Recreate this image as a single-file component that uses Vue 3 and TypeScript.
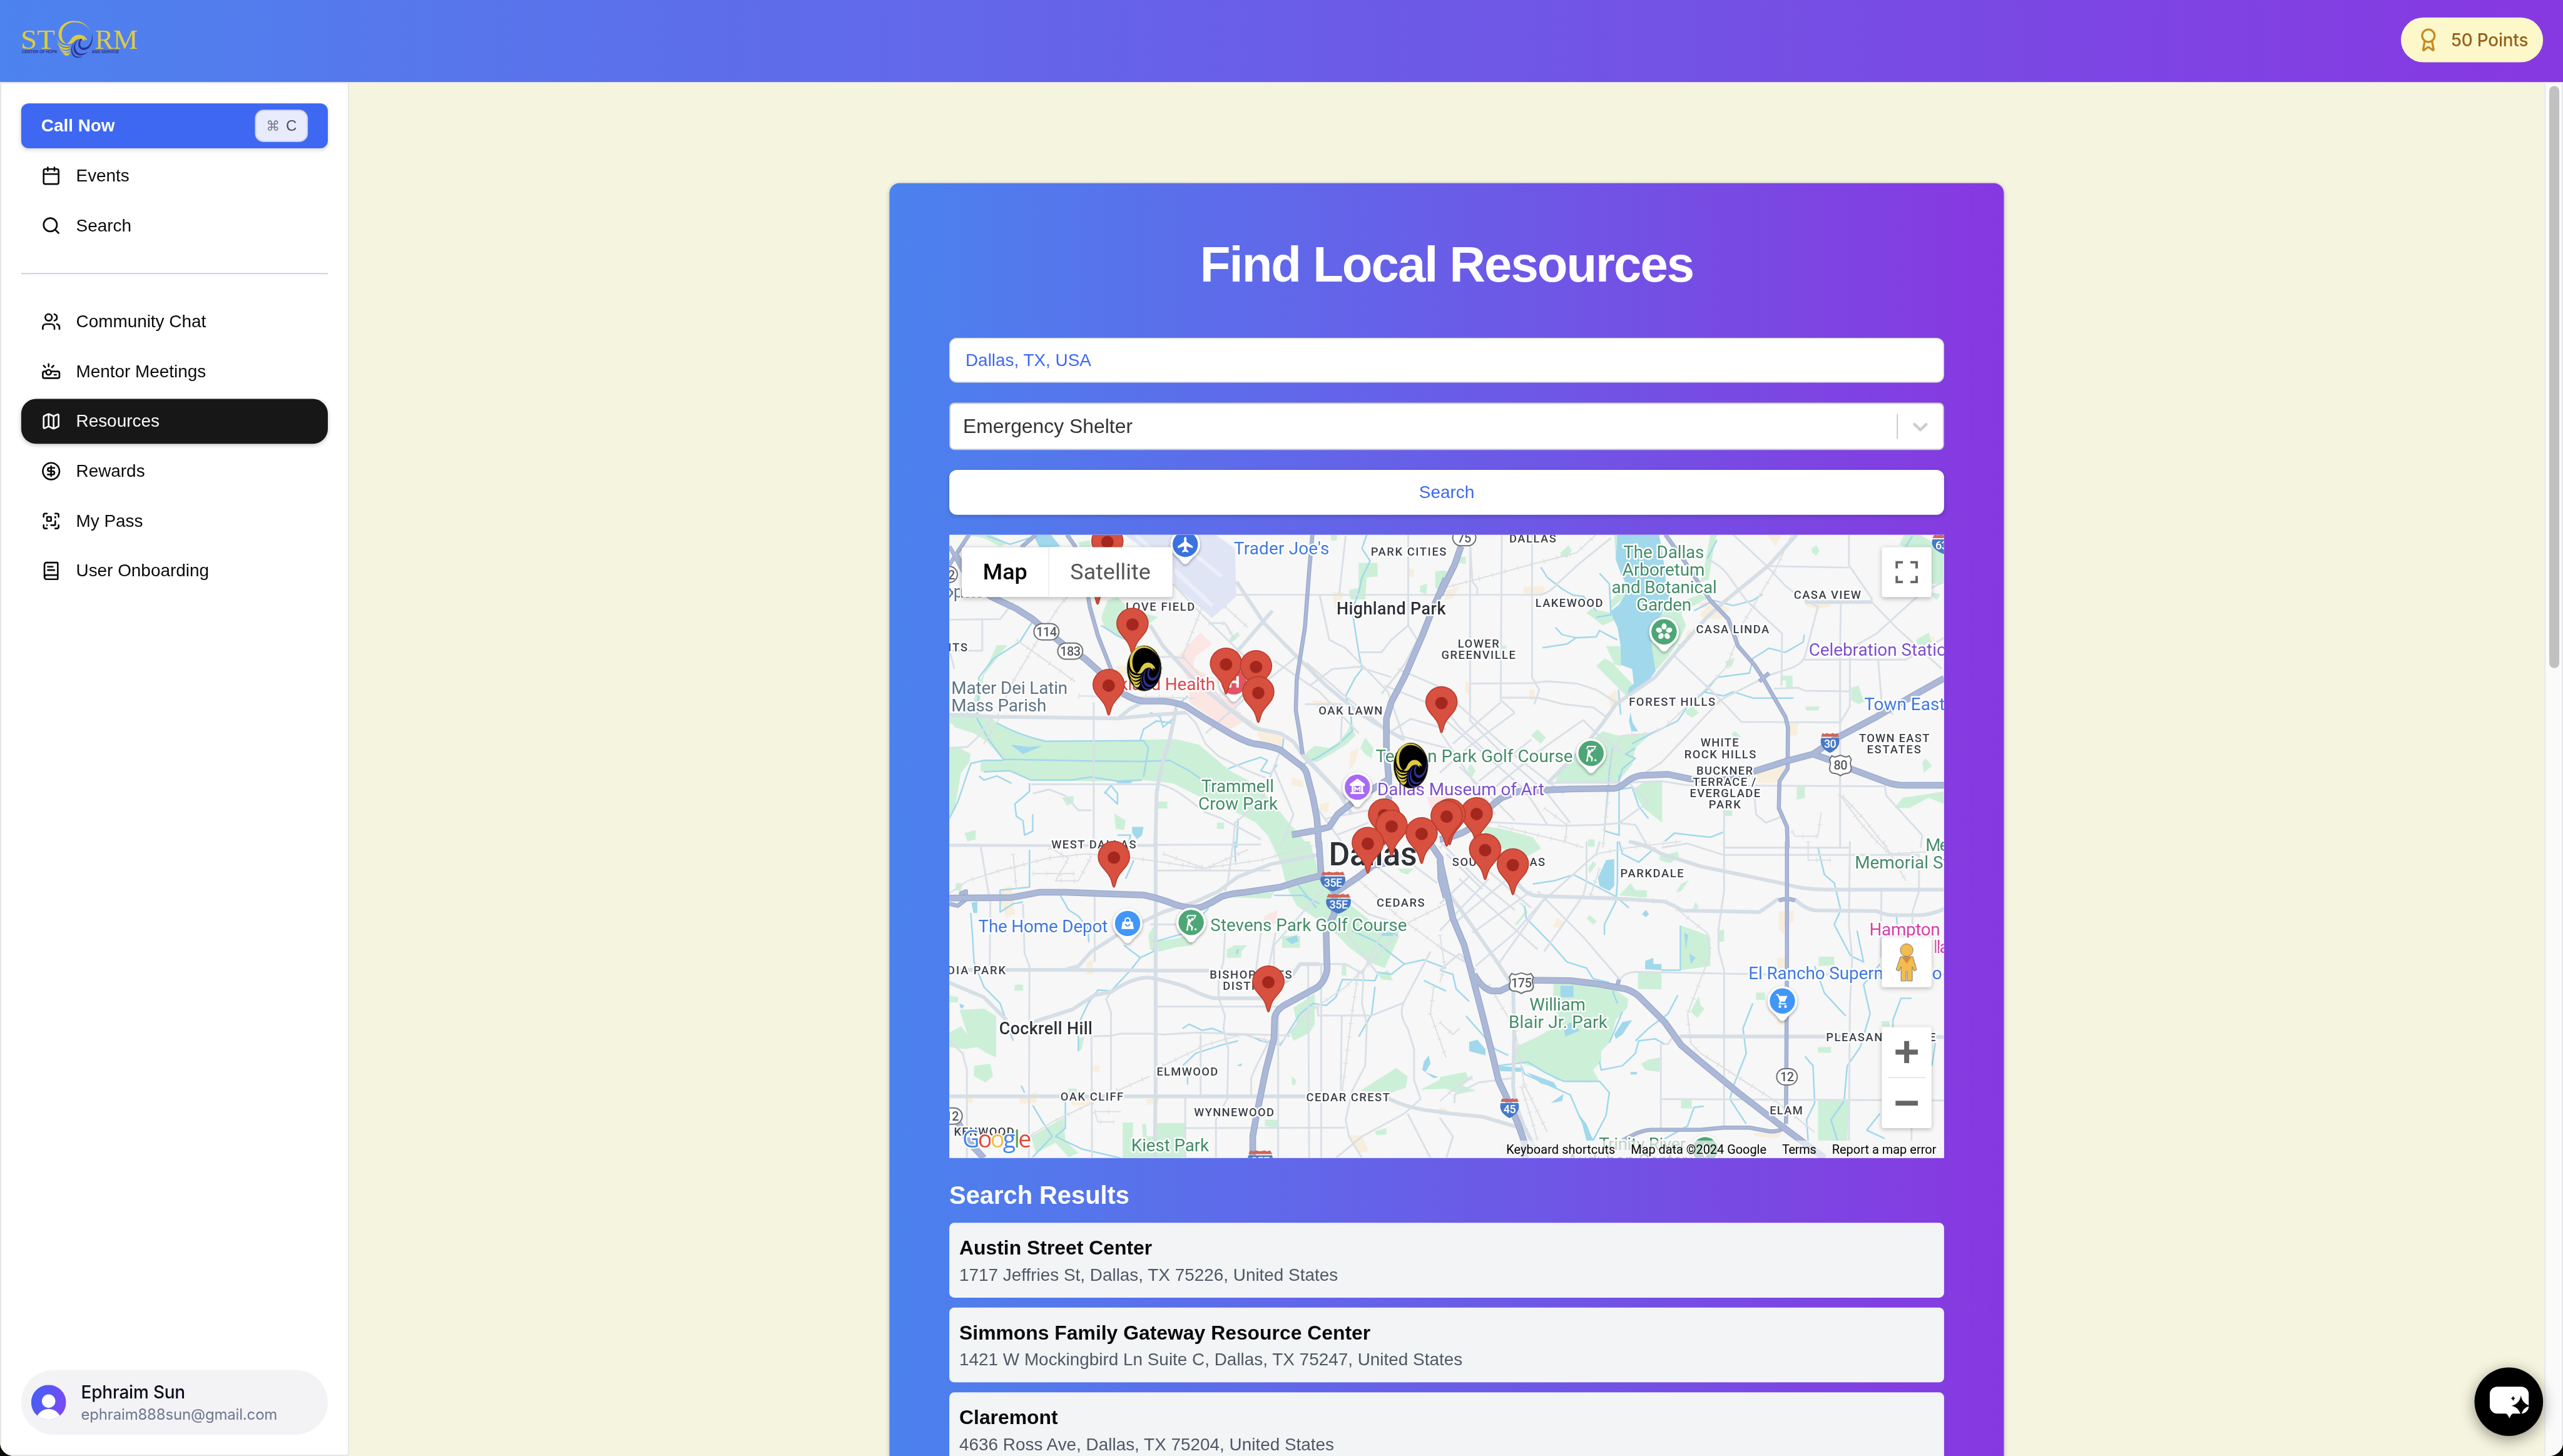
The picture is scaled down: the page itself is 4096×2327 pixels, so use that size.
<script setup lang="ts">
interface NavItem {
  label: string
  icon: string
  active?: boolean
}

const primaryNav: NavItem[] = [
  { label: 'Events', icon: 'M8 2v4M16 2v4M5 4h14a2 2 0 0 1 2 2v14a2 2 0 0 1-2 2H5a2 2 0 0 1-2-2V6a2 2 0 0 1 2-2zM3 10h18' },
  { label: 'Search', icon: 'M19 11a8 8 0 1 1-16 0a8 8 0 0 1 16 0zM21 21l-4.3-4.3' },
]

const secondaryNav: NavItem[] = [
  { label: 'Community Chat', icon: 'M16 21v-2a4 4 0 0 0-4-4H6a4 4 0 0 0-4 4v2M13 7a4 4 0 1 1-8 0a4 4 0 0 1 8 0zM22 21v-2a4 4 0 0 0-3-3.87M16 3.13a4 4 0 0 1 0 7.75' },
  { label: 'Mentor Meetings', icon: 'M5 7 3 5M9 6V3M13 7l2-2M12 13a3 3 0 1 1-6 0a3 3 0 0 1 6 0zM11.83 12H20a2 2 0 0 1 2 2v4a2 2 0 0 1-2 2H4a2 2 0 0 1-2-2v-4a2 2 0 0 1 2-2h2.17M16 16h2' },
  { label: 'Resources', active: true, icon: 'M14.106 5.553a2 2 0 0 0 1.788 0l3.659-1.83A1 1 0 0 1 21 4.619v12.764a1 1 0 0 1-.553.894l-4.553 2.277a2 2 0 0 1-1.788 0l-4.212-2.106a2 2 0 0 0-1.788 0l-3.659 1.83A1 1 0 0 1 3 19.381V6.618a1 1 0 0 1 .553-.894l4.553-2.277a2 2 0 0 1 1.788 0zM15 5.764v15M9 3.236v15' },
  { label: 'Rewards', icon: 'M22 12a10 10 0 1 1-20 0a10 10 0 0 1 20 0zM16 8h-6a2 2 0 1 0 0 4h4a2 2 0 1 1 0 4H8M12 18V6' },
  { label: 'My Pass', icon: 'M17 12v4a1 1 0 0 1-1 1h-4M17 3h2a2 2 0 0 1 2 2v2M17 8V7M21 17v2a2 2 0 0 1-2 2h-2M3 7V5a2 2 0 0 1 2-2h2M7 17h.01M7 21H5a2 2 0 0 1-2-2v-2M8 7h3a1 1 0 0 1 1 1v3a1 1 0 0 1-1 1H8a1 1 0 0 1-1-1V8a1 1 0 0 1 1-1z' },
  { label: 'User Onboarding', icon: 'M4 19.5v-15A2.5 2.5 0 0 1 6.5 2H19a1 1 0 0 1 1 1v18a1 1 0 0 1-1 1H6.5a1 1 0 0 1 0-5H20M8 11h8M8 7h6' },
]

const results = [
  { name: 'Austin Street Center', address: '1717 Jeffries St, Dallas, TX 75226, United States' },
  { name: 'Simmons Family Gateway Resource Center', address: '1421 W Mockingbird Ln Suite C, Dallas, TX 75247, United States' },
  { name: 'Claremont', address: '4636 Ross Ave, Dallas, TX 75204, United States' },
]

/* The basemap is stored as four tiles, each with its own local grid. */
const KX = 0.52296
const KY = 1 / 3
interface Tile {
  x: number
  y: number
  park: string
  water: string
  shop: string
  health: string
  air: string
  stream: string
  rail: string
  minor: string
  major: string
  highway: string
  freeway: string
}

const tiles: Tile[] = [
  {
    x: 1500, y: 840,
    park: 'M44 920L165 925L190 960Q260 1020 340 1048L500 1048L640 1040L740 1038L810 1065L860 1130L905 1190L960 1235L1010 1300L1050 1370L1085 1440L1120 1500L1150 1560L1040 1560L1020 1500L985 1440L900 1370L860 1350L780 1290L730 1250L640 1235L490 1240L295 1235L230 1190L140 1195L140 1145L210 1140L160 1050L120 1010L44 960ZM44 920L110 900L135 770L190 585L222 585L150 730L130 940L180 960L150 1000L120 1010L60 980ZM44 1080L75 1080L110 1110L105 1150L80 1200L60 1380L44 1420ZM510 450L530 370L560 355L590 400L640 430L685 450L640 500L600 560L560 545L520 500ZM90 53L170 53L225 95L200 110L150 70ZM1300 190L1358 190L1358 255L1325 258L1320 365L1275 365L1270 320L1300 310ZM1535 230L1568 225L1568 330L1535 310ZM1488 300L1510 290L1508 340L1488 330ZM905 550L930 520L935 540L905 580ZM1140 1100L1165 1070L1210 1080L1240 1050L1265 1000L1275 960L1290 1020L1265 1060L1215 1110L1170 1150L1140 1130ZM1305 1080L1320 1030L1345 1080L1340 1130L1320 1110ZM685 1338h28v34h-28ZM390 1320L425 1310L425 1345L405 1358ZM550 1395L585 1430L580 1475L555 1470ZM865 1440h22v30h-22ZM90 1490L125 1475L125 1520L100 1530ZM1215 53h18v28h-18ZM440 90L475 80L480 112L445 112ZM810 810h25v25h-25Z',
    water: 'M300 53L355 53L385 110L350 114L320 112ZM605 1460L640 1460L635 1500L620 1520L605 1490ZM232 1065L290 1075L330 1070L270 1110ZM555 1240L610 1235L600 1250L560 1250Z',
    shop: 'M555 690L580 680L620 720L560 740ZM985 1000L1065 1010L1070 1075L1000 1050ZM1220 330L1255 330L1240 410L1225 400ZM1275 1100L1300 1080L1290 1150L1270 1190ZM1155 850L1230 860L1240 900L1180 900ZM1180 1350L1210 1340L1205 1390L1180 1380ZM1452 215L1470 220L1468 260L1452 250ZM1095 1220L1130 1240L1130 1270L1095 1260Z',
    health: 'M738 650L815 525L850 580L800 640L790 690L870 760L830 790L920 870L950 950L905 990L870 960L780 860L780 760ZM1510 1320L1568 1290L1568 1400L1520 1370Z',
    air: 'M580 53L860 53L920 120L925 350L850 455L810 400L735 300L729 140L640 120Z',
    stream: 'M300 470L260 570L180 650L135 740L130 940L165 1040L210 1135L480 1143L640 1145L720 1140L780 1190L870 1290M190 960Q260 1020 340 1048L640 1045L655 1080L640 1220M44 1420L70 1340L100 1200L110 1155L150 1140L210 1140M150 1195L230 1190L295 1235L420 1235L480 1220L560 1240L635 1235M775 830L740 880L730 940L700 980L690 930L660 910M725 960L680 950L640 990L630 1040M1325 53L1310 120L1335 180L1310 260L1300 330L1280 420L1290 520L1300 620L1310 700L1290 740L1260 830L1275 900L1280 1000L1240 1060L1180 1120L1130 1160M510 490L560 540L600 570M290 1250L290 1290L245 1350L250 1410L270 1430L275 1500L300 1480L300 1400M520 1290L560 1350L560 1300L540 1260L520 1300M1070 1035L1065 1090L1080 1120M900 1180L950 1150L1000 1125L1020 1140L1000 1190L1030 1205L1050 1160M930 1420L925 1560M135 1215L150 1235L190 1215L235 1250M160 60L230 100L290 70M560 1500L600 1500L590 1560',
    rail: 'M190 930L240 760L300 600L380 400L470 240M250 560L430 760M440 830L800 840M840 480L890 480L920 560M890 400L960 500M820 400L760 640L900 880L1000 990M200 930L150 1060',
    minor: 'M487 860V1560M44 463L200 460L240 380M145 463V612H44M925 343H1568M1180 343L1210 560L1260 600M1240 343L1260 60M1452 53V490L1400 560L1370 620H1300M1452 490L1480 560L1440 680L1370 820M840 480L890 480L920 560M770 650L730 640L600 650M295 1255H690Q730 1270 770 1320L830 1390L880 1420L1000 1520M44 1080L100 1075L130 1030L180 930M44 1552H680M1220 700L1300 690L1400 740M1150 780L1220 700M1135 870H1250M1140 670L1250 820L1400 1010L1568 1080M770 910L800 960L830 1060L870 1120L960 1190L1040 1240M1060 1090L1000 1340L920 1440L915 1560M1040 1180L1100 1400L1060 1560M1568 990L1460 940L1400 1000M1040 660L1180 810L1300 1010M600 560L700 700M1110 640L960 830L830 1010M1250 870L1245 1060M1380 780L1568 900M1420 700L1568 800M1260 600L1390 810L1440 1040M300 1300L350 1280L400 1310L440 1380L480 1380M1150 1320L1260 1560M1200 1420L1330 1380M1230 1500L1330 1440M730 290L820 440L950 640M44 610L60 700',
    major: 'M925 280L1010 480L1110 640L1200 780L1300 910L1350 960L1440 1040M660 490L700 590L800 760L900 890L980 985L1060 1010L1100 1050L1130 1120L1180 1200L1240 1300L1280 1400M44 920L180 930L560 938L680 920L770 910M740 890L720 1040L690 1200L680 1300L676 1560M560 940L600 890L640 860M1035 420L925 620L850 720M1130 1110L1260 1330',
    highway: 'M405 53L430 110L465 300L475 400L500 540L540 700L560 780M1158 53L1148 230L1135 500L1110 750L1107 900L1118 1000L1128 1110M310 53L265 115M44 110L70 180M105 53L60 160L44 200',
    freeway: 'M60 140L100 260L170 350L250 410L300 460L345 520L400 590L460 650L510 720L580 820Q610 850 640 855L700 855Q740 860 770 880L830 940L900 1005Q950 1050 980 1060Q1030 1070 1060 1090L1110 1150Q1135 1175 1140 1200L1160 1320L1172 1420L1178 1560M1568 265L1530 400L1495 540L1440 740L1400 860L1385 940L1385 1080L1392 1230L1300 1320L1235 1400L1210 1460L1175 1475L1095 1498M1392 1200V1330',
  },
  {
    x: 2310, y: 840,
    park: 'M535 53L552 53L560 250L590 320L520 420L535 460L550 500L555 590L510 590L540 690L590 770L572 830L480 685L505 650L555 690L560 450L500 490L450 430L465 410L525 430L520 380L570 290L540 180ZM700 400L800 340L820 360L740 430L755 490L735 560L700 640L655 720L645 650L645 510L680 440ZM830 53L850 53L840 120L825 270L800 280L815 180ZM370 140L395 105L405 130L390 165L370 155ZM1140 120L1155 105L1165 130L1155 155L1142 140ZM1047 732H1082V790H1062V755H1047ZM1262 790L1285 780L1295 830L1310 850L1285 870L1262 850ZM875 665L905 645L895 690L880 685ZM755 900L775 880L795 910L775 935L755 915ZM1120 882L1165 880L1160 900L1125 900ZM280 1020L300 990L325 1030L310 1060ZM85 1180L95 1155L110 1190L95 1230ZM895 1010L908 1000L925 1030L900 1025ZM1480 1150L1490 1130L1510 1165L1485 1200ZM1095 1265H1120V1320L1095 1330ZM1460 560L1500 525L1510 570L1480 590L1465 580ZM355 1245L365 1180L400 1130L500 1000L545 1020L650 1010L600 1080L590 1160L545 1245ZM597 1275L625 1245L682 1243V1440L625 1370L600 1310ZM1395 1370L1420 1320L1547 1290V1350L1500 1320L1440 1370ZM120 1450L205 1475L285 1510L310 1560H170ZM55 160H80V195L55 190ZM0 230H20L25 290L0 330ZM1425 53H1470L1547 120V290H1510L1500 180L1410 100ZM455 1520h20v35h-20ZM875 1380h22v28h-22ZM730 580h20v15h-20ZM188 587h16v16h-16ZM1500 330L1535 340L1525 370Z',
    water: 'M545 53H672L680 110L690 220L695 300L705 350L690 400L680 440L645 510L650 590L655 640L662 710L630 780L590 810L575 825L580 790L595 770L590 700L555 680L555 590L545 500L530 450L525 420L550 390L570 340L575 300L555 240L540 170ZM585 910L592 960L608 1000L588 1000L580 950Z',
    shop: 'M255 305L320 300V340H260ZM795 440L835 375L890 410L860 460L810 455ZM1120 385L1195 375L1200 400L1160 412L1130 402ZM970 1180L1065 1165L1030 1250L975 1250ZM1000 53H1050L1030 110ZM1072 960H1100L1095 1020H1072ZM515 830L540 800L550 860L525 885ZM275 800H292L290 850H275ZM80 760L92 770V830L78 810ZM20 320L60 305L40 360L15 370ZM755 530L770 500L770 550L755 560ZM1500 550L1520 540L1515 570ZM850 850L865 855L860 885Z',
    health: 'M795 385L820 370L820 400L800 410ZM0 1290L25 1300L20 1350L0 1350Z',
    air: '',
    stream: 'M310 210L330 260L380 320L410 345L440 350L480 420M490 240L520 290L525 440L480 450M355 500L375 535L420 550L480 545L490 515L520 540L545 560M420 548L390 580L315 598M555 920L548 800M550 1210V1500L505 1480L520 1200L530 1080M590 1060L650 1010L730 950L760 880L820 800L850 740L950 720L960 650L1010 600L1060 620L1115 570L1118 535M780 420L840 370L900 395L960 370L990 340M810 810L870 830L900 810L960 840L1020 840L1085 840M690 1530L720 1490L770 1500L830 1510L870 1485M550 1280L590 1270L610 1360L640 1420M1430 110L1450 60M600 1080L570 1110L600 1130L560 1180L550 1240M850 80L820 170',
    rail: 'M0 315L110 270L250 210L420 140L480 53M1080 53L1030 220L930 480L880 690L800 820L690 980L640 1010L560 1020L530 1100L500 1560M1235 1310L1300 1420L1370 1560M1225 1300L1290 1440L1340 1530M180 1455L380 1530L440 1560M1080 1480L1090 1505H1160L1170 1390M320 1370L390 1450L385 1530M0 1560L100 1440',
    minor: 'M0 343H310Q340 330 360 290L430 190L525 70M1325 378V360L1255 200V53M820 170Q860 200 880 240L940 370L1050 530L1048 780M900 53L1000 200L1060 300L1110 360L1160 400L1120 640Q1110 680 1070 700L1010 730L860 850L740 1050L680 1150L600 1230M1010 205L1255 212M1325 378L1400 500L1540 700M1112 655H1430L1480 610L1547 550M1230 378L1228 640V1560M1258 640V880L1228 960M1345 660L1355 850L1390 920M715 630L850 830L925 955L1225 957M93 53V950L200 1120L330 1300L400 1440M190 53L187 850L230 910M283 53V740L305 800L290 870M93 770L290 768Q320 755 350 762L420 770L480 800L545 865M185 838H300L380 870L470 885L510 930M150 1437L380 1455L490 1450L550 1442L600 1450L640 1560M340 1248H560L680 1240L760 1260L1370 1265M872 1265V1560M1365 1265L1370 1310L1480 1500L1475 1560M1025 795L1100 790L1120 805L1255 808M55 870L240 1130L380 1300M20 950L260 1280L330 1450M0 1000L170 1400M440 945L300 1100L130 1320L90 1400M230 910L100 1060L0 1200M60 1170L180 1350L230 1430M187 860L40 1060M960 1200L970 1400L1000 1440L1050 1410M1260 600L1340 530L1480 330L1547 280M440 945L480 1010L560 1100M93 100L100 280L115 310V343M550 1442L640 1340L580 1250M280 1040L120 1240M320 1080L190 1240M0 860L60 980L180 1150',
    major: 'M1095 53L1010 200L870 380L820 450L740 590L660 740L540 870L500 960L440 1080L330 1250M1120 378H1325',
    highway: 'M692 53L750 180L800 300L830 370L885 460L915 590L965 680L990 740L1030 850L1060 930L1068 980L1067 1180L1042 1240L1040 1370L1065 1460L1067 1560M980 760L1010 720',
    freeway: 'M65 110L45 200L10 310L0 345M1547 745L1450 830L1340 930L1220 1030L1145 1110L1060 1145L960 1195L870 1235L770 1230L700 1207L620 1212Q600 1215 580 1235Q555 1270 535 1275L400 1278L320 1283L240 1290L190 1320Q150 1360 120 1430Q80 1500 0 1520M1145 1110L1200 1140L1260 1180L1380 1250Q1400 1260 1430 1260H1547',
  },
  {
    x: 1500, y: 1350,
    park: 'M1030 0H1150L1165 80L1180 170L1230 250L1350 400L1425 455L1380 610L1330 580L1270 510L1215 420L1150 350L1110 310L1080 220L1060 100ZM655 450L670 410L680 480L730 470L790 450V500L740 510L690 530L660 520ZM1065 455H1120V512H1065ZM895 560V520L920 500H957L940 530V560ZM75 810L150 805L188 840V1040L160 1020L130 990L90 1000L44 990V920L80 890L100 930ZM120 1080L170 1070L178 1130L155 1160L120 1130ZM245 690H270V718H243ZM1165 730V880L1150 920L1100 960L1090 920L1110 880L1100 800L1130 770ZM1305 1200L1415 1090L1450 1130L1445 1185L1400 1210ZM1490 1195L1568 1130V1190ZM576 1353H608L606 1460L640 1450L635 1360H648L650 1420L680 1420L678 1356H768V1524H576ZM295 1420L395 1330L400 1440L440 1500L410 1520L370 1450L310 1500ZM1012 1340H1050V1376L1012 1370ZM1350 1395L1385 1380V1410L1355 1415ZM1248 590H1262V645H1248ZM1360 640L1390 620L1405 670L1370 665ZM915 260L1040 245L1030 275L920 270ZM1420 130H1470L1450 160L1430 150ZM44 740L72 750L70 775H44ZM440 950L458 940L450 1000L440 1010ZM1095 1130L1108 1150L1105 1175L1095 1170ZM65 200H80V240L62 235ZM410 1190H435V1215H410Z',
    water: 'M1075 470L1110 450L1115 480L1095 495ZM112 295L130 290V345H118ZM1500 1060L1515 1030L1520 1070L1505 1110L1545 1135L1530 1140L1495 1100ZM1370 440H1420V455H1370ZM75 780L90 790L85 805L78 800ZM925 520L932 515L930 540L924 545ZM925 1080L942 1068L940 1082Z',
    shop: 'M205 230L235 210L245 350L220 365L200 290ZM465 580L485 570V640H465ZM415 1235H490L470 1270H420ZM260 1230L315 1205L310 1260L260 1262ZM650 1240L690 1235L680 1265L650 1268ZM485 1080H505V1110H485ZM1270 1415H1310L1330 1490L1300 1500ZM970 745L1060 740L1050 765H970ZM100 1235h16v25h-16ZM1545 1285h23v18h-23Z',
    health: 'M1010 360L1050 330V400L1010 395Z',
    air: '',
    stream: 'M110 345L115 450L120 580L150 700L200 780L240 960M290 40V220L200 235V340L240 300L270 292M385 260L410 330L440 360L470 420L472 485M580 500L630 560L600 620L540 720L500 715L470 780L440 880V1010M630 560L670 530L680 480L770 440L840 320M610 90L585 180M1280 430L1350 480L1440 590L1500 570L1568 610M1440 590L1400 640L1360 630L1350 670L1250 665L1230 750L1200 790L1160 780L1120 830L1060 980L1000 960L960 930L900 930L850 900L820 910L780 880L760 900M930 960L880 980L800 1020L760 1080M1350 700L1340 830L1300 940M300 1270L330 1350L360 1420L300 1520M400 1240V1380L370 1420L450 1480L570 1524M920 0L922 100M1040 260H1130L1180 300M1568 720L1500 670M775 1080V1170M265 1175L275 1210M1110 200L1170 320',
    rail: 'M44 250L100 190L200 140L350 80L460 60L560 70L700 100L820 130L1000 90L1160 20M700 1080L830 980L940 930L1060 970L1140 830L1260 700L1350 560L1440 400L1568 300M560 1200L660 1130M560 1200L480 1260L360 1350L280 1430M1300 620L1280 820L1250 1200M1290 170L1420 360L1568 530M1530 700L1520 830L1568 1040M240 60L250 230M350 30L410 80L370 190H440L480 70M300 155H430M700 60L830 130L960 40M490 1300H570M490 1300L500 1350H550',
    minor: 'M270 300L275 540L290 600L288 1524M140 20L170 300L168 600M490 240V580M480 900L482 1524M680 795H1060M540 725L525 760L540 820V1227M485 938L540 935L570 925H660L700 930L800 920L1090 935M890 440L885 580L870 660V750L890 840L885 900L900 1000L897 1227M1045 440L1025 600M1053 795V1524M768 1235V1524M768 1380L1260 1378M815 930V1227M680 140L1030 140M1120 590H1260L1315 640L1310 780L1325 880L1320 1080L1280 1200L1260 1340L1270 1420L1310 1524M1175 780V838H1340L1440 775M1185 590V1524M1145 590L1148 1524M1248 840L1245 1200M1520 530L1440 770Q1420 830 1450 900L1470 1000V1150L1490 1240L1440 1310L1310 1420L1230 1524M1450 1310L1520 1524M970 1140L980 1100L1025 960M44 960L85 1020L98 1100V1524M862 1524V1340L900 1230M44 15L350 18L1000 15M660 400H740M1260 440L1360 640M915 0L900 180L890 240M1190 230L1040 500V700M1380 410L1310 640M1250 250L1330 350L1430 400M1290 40L1460 250M1370 0L1540 200M1000 440L985 620M970 1140V1227',
    major: 'M44 618H420L680 622H840M677 0V1200L674 1524M44 1227H1160M1390 1235Q1450 1290 1568 1305M560 450L480 530L440 600L400 618M620 400L700 340L800 290L870 240L930 170L1030 110L1190 60M44 680L150 750L220 860M300 870L420 810L490 740L540 725Q600 660 650 655Q690 660 770 700Q830 750 860 755H1000L1090 660L1120 590H1180',
    highway: 'M44 300L70 310L95 280V240L80 250L90 270',
    freeway: 'M44 273L235 270L320 245H400L540 253L640 258Q690 275 740 305Q790 330 820 315Q850 295 880 265Q910 250 950 245L1060 220L1120 190L1170 170L1195 165M1178 0L1185 170L1225 240V350L1200 430L1203 620Q1195 680 1170 705L1070 790Q1045 815 1042 850L1040 950L1015 1100L985 1330L975 1420V1524M1225 250L1300 170L1345 115L1400 100M1520 10L1550 80L1552 180L1568 270M70 1350L100 1440L150 1524',
  },
  {
    x: 2310, y: 1350,
    park: 'M185 0H290L310 35L260 80L185 30ZM550 260L585 200L600 235H635V272ZM675 70L730 50L735 80L705 105L675 90ZM455 130L470 95L480 110L460 155ZM740 405L795 435L830 460V600L740 620ZM858 430L872 425V480L855 485ZM608 632H680V712L608 710ZM348 680H400L540 715L578 760L575 800L540 860L520 970L495 1010V1060L470 1100L490 1155L360 1150L300 1090L232 1060V990L300 940L370 880L348 760ZM775 800L795 745L800 790L812 805L790 850L770 820ZM1162 555H1210V595L1162 600ZM970 728h28v35h-28ZM1160 990h40v27h-40ZM1160 1248H1255L1250 1440H1160ZM740 1243h33v42h-33ZM1355 865h25v25h-25ZM0 1135L80 1110L90 1150L70 1175L110 1200L60 1215L0 1180ZM618 1070L640 1050L675 1040V1110L630 1100ZM230 400L265 330L240 290L255 300L270 340L235 405ZM725 245L740 205L765 185L740 240ZM775 330L785 290L795 320ZM450 370L460 355L482 385L470 400Z',
    water: 'M485 175L510 90L535 85V215L520 238L490 215ZM630 575L655 560V590H680V620L630 615ZM370 695H410V750H370ZM380 900L400 870L430 910L385 940ZM535 930L560 870L590 860L560 930L540 950ZM90 965L115 955L140 1000V1030L90 1010ZM180 1080L250 1090L255 1110L185 1105ZM340 1260L380 1215L375 1250ZM265 1110L350 1160L360 1185L310 1165ZM620 350L632 330L642 350L632 365ZM585 1110h20v12h-20ZM430 1320L450 1360L470 1440H450ZM750 440L762 450L755 520ZM765 540L785 560L770 590Z',
    shop: 'M1040 335H1085V390L1060 400L1055 450L1040 420ZM1035 560h25v60h-25ZM1035 850h22v33h-22ZM345 410L360 370L382 390L365 418ZM960 1405L1050 1400L1040 1430L970 1420ZM0 1280L35 1300L0 1310Z',
    health: '',
    air: '',
    stream: 'M285 205L350 190L410 160L460 200L540 265L580 320M550 0L560 60L610 100L660 30M545 0V190L540 290L505 400V450M260 310L265 370L340 490L390 580L450 610L470 660L520 680M180 1080L270 1062L320 1110L380 1155H490L520 1210L510 1320L470 1440L430 1330L400 1220L330 1170L260 1120L250 1080M490 1060L495 1100L560 1080L600 1020L610 960L660 950L690 975M600 960L640 900L700 830L730 740M680 620H738V405M0 620L40 640L50 710L90 770M80 840L170 1000L210 1030M1160 30L1180 160L1210 200L1230 330L1210 400L1260 550L1300 580L1280 430M1150 600L1180 730L1245 840M960 780L930 900L940 1020L900 1180L890 1240L940 1360M1120 1035L1145 1080L1150 1260L1125 1340L1130 1440M1350 590L1300 690L1320 830L1290 990L1250 1080L1240 1250L1200 1340L1220 1440M1447 755H1415L1390 860V930M680 1440L760 1370L780 1280L810 1275M1400 345L1405 430L1425 460M1350 1310L1310 1390L1365 1430M530 720L545 780M520 970L560 820M1520 970L1510 1080',
    rail: 'M490 130L460 270L700 290Q760 370 820 440L830 540L760 830L770 970L800 1020L1030 1250L1150 1400M250 1180L280 1330L300 1440M262 1180L330 1400M1130 0V90H1200M0 450L15 600L0 680M0 870L40 930L60 900M100 1140L60 1170L0 1250M150 690L230 900L260 1180M1360 0L1430 190M480 60L580 30L740 0M1340 0L1380 60L1500 50',
    minor: 'M555 660Q570 630 600 628L1000 640H1547M300 240L440 460L555 670M872 0V240L855 420V520L872 620V1378M872 30H1255M680 30L760 10L870 65H1470V240L1450 340V620M1258 0L1255 400L1265 560L1258 800L1255 1440M1355 235L1352 560M678 980V1380M678 1240L1547 1247M720 930L700 975H678M180 590L315 290L480 60L490 0M110 600L230 440L330 260M0 430L150 180M0 620L60 540L110 620M100 440L280 240M140 130L280 320M45 1260V1220L120 1160L220 1140M1447 1000V1440M0 1330L40 1420L20 1524M450 0V200L440 260L320 530M0 300L90 170M40 400L200 190M60 180L200 380L300 520M20 60L130 230M100 1130L60 1170M0 510L100 600M0 0L120 190L230 330',
    major: 'M0 190L60 320L180 590L225 700L228 940L225 1180L230 1250L260 1380L310 1524M230 180Q260 260 300 262L540 275L690 290Q720 310 745 333L980 340Q1010 310 1035 280H1090Q1120 325 1150 332L1340 335Q1360 350 1385 355H1480Q1520 345 1547 325M735 938L1185 940L1547 942M0 1305L130 1325L270 1390M580 0Q640 20 680 60L800 120L1060 205Q1110 230 1180 232H1547',
    highway: 'M1065 0V600L1062 1360M1060 1365Q1050 1400 1010 1395L950 1378H870L800 1388H650Q620 1390 590 1415L560 1440M1040 285Q1065 268 1090 285M545 690L550 665',
    freeway: 'M0 90L20 230L40 370L75 500L95 620L130 830L165 1050L180 1150L210 1250L240 1360L260 1450L262 1524M105 640Q130 710 160 720H185L230 685L270 668L400 670L480 685L570 710Q600 725 620 760L690 870L740 980L800 1060L920 1215L1040 1360L1180 1524',
  },
]

type Layer = 'park' | 'health' | 'shop' | 'air' | 'water' | 'stream' | 'rail' | 'railtie' | 'minor' | 'major' | 'highcase' | 'highway' | 'freecase' | 'freeway'
const layers: Layer[] = ['park', 'health', 'shop', 'air', 'water', 'stream', 'minor', 'rail', 'railtie', 'major', 'highcase', 'highway', 'freecase', 'freeway']

function layerPath(tile: Tile, layer: Layer): string {
  if (layer === 'railtie') return tile.rail
  if (layer === 'highcase') return tile.highway
  if (layer === 'freecase') return tile.freeway
  return tile[layer]
}

const px = (t: number, x: number) => tiles[t].x + x * KX
const py = (t: number, y: number) => tiles[t].y + y * KY

type LabelKind = 'area' | 'town' | 'city' | 'green' | 'blue' | 'purple' | 'slate' | 'red' | 'pink'
type LabelRow = [number, string, number, number, number, LabelKind]
const labelRows: LabelRow[] = [
  [0, "Trader Joe's", 917, 1210, 147, 'blue'],
  [0, 'PARK CITIES', 1337, 1569, 153, 'area'],
  [0, 'Highland Park', 1232, 1567, 437, 'town'],
  [0, 'LOVE FIELD', 585, 797, 420, 'area'],
  [0, 'HTS', 25, 100, 615, 'area'],
  [0, 'xpress', 40, 150, 356, 'slate'],
  [0, 'Mater Dei Latin', 50, 407, 820, 'slate'],
  [0, 'Mass Parish', 50, 342, 903, 'slate'],
  [0, 'Parkland Health', 485, 860, 802, 'red'],
  [0, 'OAK LAWN', 1177, 1373, 920, 'area'],
  [0, 'Trammell', 817, 1040, 1293, 'green'],
  [0, 'Crow Park', 808, 1052, 1376, 'green'],
  [0, 'Tenison Park Golf Course', 1352, 1957, 1147, 'green'],
  [0, 'Dallas Museum of Art', 1357, 1869, 1308, 'purple'],
  [0, 'WEST DALLAS', 357, 617, 1563, 'area'],
  [1, 'DALLAS', 213, 357, 90, 'area'],
  [1, 'The Dallas', 563, 811, 167, 'green'],
  [1, 'Arboretum', 560, 813, 251, 'green'],
  [1, 'and Botanical', 527, 850, 335, 'green'],
  [1, 'Garden', 603, 772, 419, 'green'],
  [1, 'LAKEWOOD', 293, 500, 402, 'area'],
  [1, 'CASA VIEW', 1086, 1292, 363, 'area'],
  [1, 'CASA LINDA', 786, 1010, 528, 'area'],
  [1, 'LOWER', 55, 182, 597, 'area'],
  [1, 'GREENVILLE', 5, 232, 652, 'area'],
  [1, 'Celebration Station', 1132, 1584, 635, 'purple'],
  [1, 'FOREST HILLS', 580, 845, 877, 'area'],
  [1, 'Town East', 1302, 1550, 897, 'blue'],
  [1, 'WHITE', 800, 917, 1074, 'area'],
  [1, 'ROCK HILLS', 750, 970, 1129, 'area'],
  [1, 'BUCKNER', 787, 960, 1208, 'area'],
  [1, 'TERRACE /', 776, 970, 1263, 'area'],
  [1, 'EVERGLADE', 767, 983, 1317, 'area'],
  [1, 'PARK', 825, 923, 1371, 'area'],
  [1, 'TOWN EAST', 1286, 1502, 1052, 'area'],
  [1, 'ESTATES', 1310, 1476, 1106, 'area'],
  [3, 'Mes', 1490, 1586, 46, 'green'],
  [3, 'Memorial St', 1273, 1562, 130, 'green'],
  [2, 'Dallas', 1208, 1479, 114, 'city'],
  [2, 'CEDARS', 1355, 1502, 315, 'area'],
  [2, 'The Home Depot', 133, 530, 436, 'blue'],
  [2, 'Stevens Park Golf Course', 845, 1448, 430, 'green'],
  [2, 'DIA PARK', 38, 217, 638, 'area'],
  [2, 'BISHOP ARTS', 843, 1095, 660, 'area'],
  [2, 'DISTRICT', 883, 1056, 714, 'area'],
  [2, 'Cockrell Hill', 197, 483, 928, 'town'],
  [2, 'ELMWOOD', 680, 868, 1128, 'area'],
  [2, 'OAK CLIFF', 385, 578, 1247, 'area'],
  [2, 'CEDAR CREST', 1139, 1395, 1250, 'area'],
  [2, 'WYNNEWOOD', 795, 1040, 1323, 'area'],
  [2, 'KENWOOD', 58, 243, 1417, 'area'],
  [2, 'Kiest Park', 602, 841, 1491, 'green'],
  [3, 'SOUTH DALLAS', 38, 323, 118, 'area'],
  [3, 'PARKDALE', 554, 748, 172, 'area'],
  [3, 'Hampton', 1318, 1535, 452, 'pink'],
  [3, 'lla', 1515, 1562, 536, 'pink'],
  [3, 'El Rancho Supermercado', 947, 1541, 664, 'blue'],
  [3, 'William', 275, 447, 815, 'green'],
  [3, 'Blair Jr. Park', 211, 514, 898, 'green'],
  [3, 'PLEASANT GROVE', 1185, 1521, 961, 'area'],
  [3, 'ELAM', 1012, 1113, 1314, 'area'],
  [3, 'Trinity River', 488, 755, 1485, 'green'],
  [3, 'Audubon Center', 390, 760, 1565, 'green'],
]
const labels = labelRows.map(([t, text, x0, x1, y, kind]) => ({
  text, kind, x: px(t, x0), y: py(t, y), w: (x1 - x0) * KX,
}))

type ShieldKind = 'state' | 'us' | 'inter'
const shieldRows: [number, string, number, number, number, ShieldKind][] = [
  [0, '114', 342, 521, 40, 'state'],
  [0, '183', 415, 614, 40, 'state'],
  [0, '12', 40, 245, 30, 'state'],
  [1, '75', 75, 68, 37, 'state'],
  [3, '12', 1065, 1133, 33, 'state'],
  [2, '12', 52, 1322, 33, 'state'],
  [1, '80', 1229, 1163, 37, 'us'],
  [3, '175', 250, 681, 41, 'us'],
  [1, '30', 1197, 1053, 30, 'inter'],
  [1, '635', 1548, 97, 40, 'inter'],
  [2, '35E', 1221, 190, 40, 'inter'],
  [2, '35E', 1238, 297, 40, 'inter'],
  [3, '45', 214, 1281, 30, 'inter'],
  [2, '35E', 998, 1532, 40, 'inter'],
]
const shields = shieldRows.map(([t, text, x, y, w, kind]) => ({ text, kind, w, x: px(t, x), y: py(t, y) }))

type PoiKind = 'plane' | 'museum' | 'flower' | 'golf' | 'bag' | 'cart' | 'hospital' | 'tree'
const poiRows: [number, number, number, string, PoiKind][] = [
  [0, 768, 100, '#3a72de', 'plane'],
  [0, 917, 762, '#e25563', 'hospital'],
  [0, 1296, 1269, '#a96af3', 'museum'],
  [1, 688, 521, '#4da676', 'flower'],
  [1, 464, 1106, '#4da676', 'golf'],
  [2, 591, 395, '#4196f8', 'bag'],
  [2, 786, 390, '#4da676', 'golf'],
  [3, 1051, 768, '#4196f8', 'cart'],
  [3, 814, 1484, '#4da676', 'tree'],
]
const pois = poiRows.map(([t, x, y, color, kind]) => ({ color, kind, x: px(t, x), y: py(t, y) }))

const pinRows: [number, number, number][] = [
  [0, 529, 89], [0, 499, 246], [0, 606, 486], [0, 533, 780], [0, 893, 678], [0, 985, 690], [0, 992, 815],
  [0, 1554, 864], [1, 113, 1398], [1, 30, 1404], [1, 21, 1411], [0, 1378, 1404], [0, 1401, 1458],
  [0, 1493, 1494], [0, 1328, 1541], [3, 139, 42], [3, 224, 114], [2, 549, 78], [2, 1023, 678],
]
const pins = pinRows.map(([t, x, y]) => ({ x: px(t, x), y: py(t, y) }))
const eagles = [[642, 697], [1460, 1165]].map(([x, y]) => ({ x: px(0, x), y: py(0, y) }))
</script>

<template>
  <div class="viewport">
    <div class="app">
      <svg class="defs" width="0" height="0" aria-hidden="true">
        <defs>
          <symbol id="eagle" viewBox="0 0 60 60" preserveAspectRatio="none">
            <g fill="#dcca45">
              <path d="M55 15C48 4 38 0 29 0C14 0 4 10 4 22C4 31 11 38 18 36C23 34 23 29 27 26C33 20 46 21 50 31L45 29.500L46 33C41 27 33 28 28 34C22 41 9 37 9 22C9 10 18 2.500 29 2.200C39 2 48 6 55 15Z" />
              <path d="M1 22C1 35 10 42 25 39C13 46 1 39 1 22Z" />
              <path d="M2 33C6 43 14 46 25 42C15 51 4 46 2 33Z" />
              <path d="M5 42C10 49 16 50 24 46C17 55 8 52 5 42Z" />
              <path d="M10 50C15 53 19 53 23 49.500C21 58 14 58 10 50Z" />
            </g>
            <g fill="#2d3193">
              <path d="M58 21C61 38 51 50 41 46C34 43 34 35 39 29C43 28 41 29 40 32C37 38 39 43 45 43C52 43 58 35 58 21Z" />
              <path d="M38 29.500C29 34 29 45 34 50C39 54 46 53 52 49C44 57 35 57 30 51C26 44 28 33 38 29.500Z" />
              <path d="M29 35C24 43 25 52 31 56C35 58 40 58 43 56C38 61 29 60 26 54C23 47 24 40 29 35Z" />
            </g>
          </symbol>
        </defs>
      </svg>

      <header class="topbar">
        <svg class="logo" viewBox="34 30 190 66" width="190" height="66">
          <g class="logo-word">
            <text x="33" y="78.500" textLength="55" lengthAdjust="spacingAndGlyphs">ST</text>
            <text x="152" y="78.500" textLength="69" lengthAdjust="spacingAndGlyphs">RM</text>
          </g>
          <use href="#eagle" x="90" y="33.500" width="60" height="60" />
          <g class="logo-tag">
            <text x="35" y="85.800" textLength="57">CENTER OF HOPE</text>
            <text x="147" y="85.800" textLength="44">AND SERVICE</text>
          </g>
        </svg>
        <div class="points">
          <svg width="40" height="40" viewBox="0 0 24 24" class="line">
            <path d="m15.477 12.890 1.515 8.526a.5.5 0 0 1-.81.47l-3.580-2.687a1 1 0 0 0-1.197 0l-3.586 2.686a.5.5 0 0 1-.81-.469l1.514-8.526" />
            <circle cx="12" cy="8" r="6" />
          </svg>
          <span>50 Points</span>
        </div>
      </header>

      <div class="body">
        <aside class="sidebar">
          <button class="call">
            <span>Call Now</span>
            <kbd><span class="cmd">⌘</span><span>C</span></kbd>
          </button>
          <a v-for="item in primaryNav" :key="item.label" class="nav-item">
            <svg width="32" height="32" viewBox="0 0 24 24" class="line"><path :d="item.icon" /></svg>
            <span>{{ item.label }}</span>
          </a>
          <hr class="divider" />
          <a v-for="item in secondaryNav" :key="item.label" class="nav-item" :class="{ active: item.active }">
            <svg width="32" height="32" viewBox="0 0 24 24" class="line"><path :d="item.icon" /></svg>
            <span>{{ item.label }}</span>
          </a>
          <div class="user">
            <svg class="avatar" width="56" height="56" viewBox="0 0 56 56">
              <defs>
                <linearGradient id="avatarFill" x1="0" y1=".4" x2="1" y2=".6">
                  <stop offset="0" stop-color="#4a5df5" />
                  <stop offset=".5" stop-color="#5b55f5" />
                  <stop offset="1" stop-color="#7d49f3" />
                </linearGradient>
                <clipPath id="avatarClip"><circle cx="28" cy="28" r="28" /></clipPath>
              </defs>
              <g clip-path="url(#avatarClip)">
                <rect width="56" height="56" fill="url(#avatarFill)" />
                <circle cx="28" cy="26" r="10.800" fill="#fff" />
                <circle cx="28" cy="59" r="20.500" fill="#fff" />
              </g>
            </svg>
            <div class="user-text">
              <div class="user-name">Ephraim Sun</div>
              <div class="user-mail">ephraim888sun@gmail.com</div>
            </div>
          </div>
        </aside>

        <main class="main">
          <section class="card">
            <h1>Find Local Resources</h1>
            <div class="field">Dallas, TX, USA</div>
            <div class="select">
              <span class="select-value">Emergency Shelter</span>
              <span class="select-sep"></span>
              <svg width="40" height="40" viewBox="0 0 20 20" fill="#ccc">
                <path d="M4.516 7.548c0.436-0.446 1.043-0.481 1.576 0l3.908 3.747 3.908-3.747c0.533-0.481 1.141-0.446 1.574 0 0.436 0.445 0.408 1.197 0 1.615-0.406 0.418-4.695 4.502-4.695 4.502-0.217 0.223-0.502 0.335-0.787 0.335s-0.570-0.112-0.789-0.335c0 0-4.287-4.084-4.695-4.502s-0.436-1.170 0-1.615z" />
              </svg>
            </div>
            <button class="go">Search</button>

            <div class="map">
              <svg class="canvas" width="1596" height="1000" viewBox="1523 858 1596 1000">
                <g v-for="layer in layers" :key="layer" :class="['layer', layer]">
                  <path
                    v-for="(tile, i) in tiles"
                    :key="i"
                    :d="layerPath(tile, layer)"
                    :transform="`matrix(${KX} 0 0 ${KY} ${tile.x} ${tile.y})`"
                  />
                </g>
                <g class="runway">
                  <path d="M1822 858L1945 972M1890 868L1960 925M1875 905L1935 962" />
                </g>

                <g v-for="(s, i) in shields" :key="'s' + i" :transform="`translate(${s.x} ${s.y})`" class="shield">
                  <rect v-if="s.kind === 'state'" :x="-s.w / 2" y="-13" :width="s.w" height="26" rx="13" class="plate" />
                  <path
                    v-else-if="s.kind === 'us'"
                    :transform="`scale(${s.w / 40} 1)`"
                    d="M-15 -15Q-10 -12 -6 -14L0 -16L6 -14Q10 -12 15 -15L19 -9Q16 -4 18 1Q21 10 13 13Q6 13 0 17Q-6 13 -13 13Q-21 10 -18 1Q-16 -4 -19 -9Z"
                    class="plate"
                  />
                  <g v-else :transform="`scale(${s.w / 40} 1)`">
                    <path d="M-16 -15Q-10 -12 -7 -15Q0 -12 7 -15Q10 -12 16 -15L19 -9H-19Z" fill="#cf6459" />
                    <path d="M-19 -7H19C23 4 14 12 0 17C-14 12 -23 4 -19 -7Z" fill="#4779c6" />
                  </g>
                  <text :y="s.kind === 'inter' ? 9 : 7.500" :class="{ light: s.kind === 'inter' }">{{ s.text }}</text>
                </g>

                <g v-for="(p, i) in pois" :key="'p' + i" :transform="`translate(${p.x} ${p.y})`" class="poi">
                  <path class="drop" d="M0 32Q-4 32 -7 27Q-10 23 -17 17A24 24 0 1 1 17 17Q10 23 7 27Q4 32 0 32Z" />
                  <circle r="20.300" :fill="p.color" />
                  <path v-if="p.kind === 'plane'" fill="#fff" d="M-2 -10Q0 -14 2 -10V-4L12 3V6L2 3V8L5 11V13L0 11.500L-5 13V11L-2 8V3L-12 6V3L-2 -4Z" />
                  <g v-else-if="p.kind === 'museum'" fill="#fff">
                    <path d="M0 -14L12 -5V-2H-12V-5ZM-11 8H11V11H-11ZM-9 -2H-6V8H-9ZM6 -2H9V8H6Z" />
                    <path d="M-4 7V0L0 4L4 0V7" fill="none" stroke="#fff" stroke-width="2" />
                  </g>
                  <g v-else-if="p.kind === 'flower'" fill="#fff">
                    <ellipse v-for="a in 5" :key="a" cx="0" cy="-8.500" rx="4" ry="5" :transform="`rotate(${a * 72})`" />
                  </g>
                  <g v-else-if="p.kind === 'golf'" fill="none" stroke="#fff" stroke-width="2">
                    <path d="M-7 -7L-5 -11H7L5 -6" />
                    <path d="M-5 -7L1 -3L-2 2L3 7L2 13H0L0 8L-4 4L-5 13H-8L-6 2Z" fill="#fff" stroke="none" />
                    <circle cx="2" cy="-5" r="2.200" fill="#fff" stroke="none" />
                    <circle cx="7" cy="11" r="1.800" fill="#fff" stroke="none" />
                  </g>
                  <g v-else-if="p.kind === 'bag'">
                    <path d="M-8 -3H8L10 9H-10Z" fill="#fff" />
                    <path d="M-4 -2V-5A4 4 0 0 1 4 -5V-2" fill="none" stroke="#fff" stroke-width="2" />
                    <path d="M-4 1Q0 7 4 1" fill="none" stroke="#4196f8" stroke-width="2" />
                  </g>
                  <g v-else-if="p.kind === 'cart'">
                    <path d="M-6.500 -8H8L4 1H-3Z" fill="#fff" />
                    <path d="M-10 -10H-7L-3 1L-5 4.500H6" fill="none" stroke="#fff" stroke-width="2" />
                    <circle cx="-4" cy="9" r="2.200" fill="#fff" /><circle cx="5" cy="9" r="2.200" fill="#fff" />
                  </g>
                  <path v-else-if="p.kind === 'hospital'" d="M-6 -9V9M6 -9V9M-6 0H6" stroke="#fff" stroke-width="4" />
                  <path v-else fill="#fff" d="M0 -12L7 0H3L8 7H2V12H-2V7H-8L-3 0H-7Z" />
                </g>

                <text
                  v-for="(l, i) in labels"
                  :key="'l' + i"
                  :class="['label', l.kind]"
                  :x="l.x"
                  :y="l.y"
                  :textLength="l.w"
                >{{ l.text }}</text>

                <g v-for="(p, i) in pins" :key="'m' + i" :transform="`translate(${p.x} ${p.y})`">
                  <path class="pin" d="M0 47.500C-2.500 47.500 -2 40 -6 32C-11 21 -25.200 13 -25.200 -1A25.200 25.200 0 0 1 25.200 -1C25.200 13 11 21 6 32C2 40 2.500 47.500 0 47.500Z" />
                  <circle r="10" fill="#a4271e" />
                </g>
                <g v-for="(e, i) in eagles" :key="'e' + i" :transform="`translate(${e.x} ${e.y})`">
                  <ellipse rx="27.500" ry="36.300" fill="#000" stroke="#6c6a30" stroke-width="1" />
                  <use href="#eagle" x="-27" y="-35.500" width="54" height="71" />
                </g>

                <text class="google" :x="px(2, 84)" :y="py(2, 1474)" textLength="111"><tspan fill="#4285f4">G</tspan><tspan fill="#e04a3a">o</tspan><tspan fill="#f2bd42">o</tspan><tspan fill="#4285f4">g</tspan><tspan fill="#57a65b">l</tspan><tspan fill="#e04a3a">e</tspan></text>
                <rect x="2406" y="1830" width="713" height="28" fill="#f5f5f5" opacity=".7" />
                <g class="legal">
                  <text :x="px(3, 204)" y="1851.500" :textLength="334 * KX">Keyboard shortcuts</text>
                  <text :x="px(3, 586)" y="1851.500" :textLength="416 * KX">Map data ©2024 Google</text>
                  <text :x="px(3, 1050)" y="1851.500" :textLength="105 * KX">Terms</text>
                  <text :x="px(3, 1203)" y="1851.500" :textLength="320 * KX">Report a map error</text>
                </g>
              </svg>

              <div class="map-type">
                <button class="on">Map</button>
                <button>Satellite</button>
              </div>
              <div class="map-ctl top">
                <svg width="36" height="36" viewBox="0 0 36 36" fill="none" stroke="#666" stroke-width="4">
                  <path d="M2 12V2H12M24 2H34V12M34 24V34H24M12 34H2V24" />
                </svg>
              </div>
              <div class="map-tools">
                <div class="map-ctl">
                  <svg width="36" height="62" viewBox="0 0 36 62" stroke="#777" stroke-width="1">
                    <path d="M8 22H28L34 43L30 45L27 38V61H19V46H17V61H9V38L6 45L1 43Z" fill="#f3bc4c" />
                    <path d="M10 22H26L18 33Z" fill="#d9893c" stroke="none" />
                    <circle cx="18" cy="11.500" r="10.200" fill="#f3bc4c" />
                  </svg>
                </div>
                <div class="map-ctl zoom">
                  <svg width="36" height="36" viewBox="0 0 36 36" fill="#666"><path d="M14 0H22V14H36V22H22V36H14V22H0V14H14Z" /></svg>
                  <span class="rule"></span>
                  <svg width="36" height="36" viewBox="0 0 36 36" fill="#666"><path d="M0 14H36V22H0Z" /></svg>
                </div>
              </div>
            </div>

            <h2>Search Results</h2>
            <ul class="results">
              <li v-for="r in results" :key="r.name">
                <div class="name">{{ r.name }}</div>
                <div class="address">{{ r.address }}</div>
              </li>
            </ul>
          </section>
        </main>
        <div class="scroll"><span></span></div>
      </div>

      <div class="chat">
        <svg width="110" height="110" viewBox="0 0 110 110">
          <rect x="24.500" y="31" width="62.500" height="43" rx="12" fill="#fff" />
          <path d="M49 73H63Q58.500 75 56 81.500Q53.500 75 49 73Z" fill="#fff" />
          <path d="M74.500 45Q77 59 90 61.500Q77 64 74.500 78Q72 64 59 61.500Q72 59 74.500 45Z" fill="#000" />
          <path d="M62 45.500Q62.700 49 65.800 49.700Q62.700 50.400 62 54Q61.300 50.400 58 49.700Q61.300 49 62 45.500Z" fill="#000" />
        </svg>
      </div>
    </div>
  </div>
</template>

<style>
body {
  background: #000;
}
</style>

<style scoped>
* {
  box-sizing: border-box;
}
.viewport {
  width: 4096px;
  height: 2327px;
  overflow: hidden;
  background: #0c0d06;
}
.app {
  position: relative;
  width: 4112px;
  height: 2336px;
  display: flex;
  flex-direction: column;
  overflow: hidden;
  border-radius: 0 0 22px 22px;
  background: #fff;
  transform: scale(0.99611);
  transform-origin: 0 0;
  font-family: 'Liberation Sans', Arial, sans-serif;
  font-size: 28px;
  color: #0a0a0a;
}
.defs {
  position: absolute;
}
button {
  border: 0;
  font: inherit;
}
.line {
  flex: none;
  fill: none;
  stroke: currentColor;
  stroke-width: 2;
  stroke-linecap: round;
  stroke-linejoin: round;
}

.topbar {
  flex: none;
  height: 132px;
  padding: 0 32px 0 34px;
  display: flex;
  align-items: center;
  justify-content: space-between;
  background: linear-gradient(90deg, #4d83ee, #8738e1);
}
.logo {
  margin-top: -6px;
  overflow: visible;
}
.logo-word {
  font: 45.500px 'Liberation Serif', serif;
  fill: #dcca45;
}
.logo-tag {
  font: bold 6.6px 'Liberation Sans', sans-serif;
  fill: #2d3193;
}
.points {
  width: 228px;
  height: 72px;
  margin-top: -4px;
  padding-left: 24px;
  display: flex;
  align-items: center;
  gap: 16px;
  border-radius: 36px;
  background: #fdf8c9;
  color: #c58b27;
}
.points span {
  font: 500 28px Inter, sans-serif;
  letter-spacing: -0.2px;
  color: #96611f;
  white-space: nowrap;
}

.body {
  flex: 1;
  min-height: 0;
  display: flex;
}
.sidebar {
  flex: none;
  width: 560px;
  padding: 32px;
  display: flex;
  flex-direction: column;
  gap: 8px;
  border: 2px solid #e5e5e5;
  background: #fff;
}
.call {
  height: 72px;
  padding: 0 32px;
  display: flex;
  align-items: center;
  justify-content: space-between;
  border-radius: 12px;
  background: #3e68f2;
  color: #fff;
  font-weight: bold;
  box-shadow: 0 2px 6px rgba(0, 0, 0, 0.15);
}
kbd {
  width: 85px;
  height: 52px;
  display: flex;
  align-items: center;
  justify-content: center;
  gap: 10px;
  border: 2px solid #cbcfe8;
  border-radius: 14px;
  background: #e8ebfb;
  color: #4a4b60;
  font: 24px 'Liberation Sans', sans-serif;
}
.cmd {
  font: 22px 'DejaVu Sans', sans-serif;
  color: #74788c;
}
.nav-item {
  height: 72px;
  padding: 0 32px;
  display: flex;
  align-items: center;
  gap: 24px;
  border-radius: 24px;
}
.nav-item.active {
  background: #171717;
  color: #fafafa;
  box-shadow: 0 2px 6px rgba(0, 0, 0, 0.2);
}
.divider {
  width: 100%;
  height: 2px;
  margin: 32px 0;
  border: 0;
  background: #cfcfe6;
}
.user {
  height: 104px;
  margin-top: auto;
  padding: 0 16px;
  display: flex;
  align-items: center;
  gap: 24px;
  border-radius: 52px;
  background: #f3f3f6;
  font-family: Inter, sans-serif;
}
.user-name {
  font-size: 28px;
  font-weight: 500;
  line-height: 40px;
  letter-spacing: -0.15px;
  color: #0b0f1c;
}
.user-mail {
  font-size: 24px;
  line-height: 32px;
  letter-spacing: -0.13px;
  color: #6e7690;
}

.main {
  flex: none;
  width: 3522px;
  padding-top: 162px;
  display: flex;
  justify-content: center;
  align-items: flex-start;
  overflow: hidden;
  background: #f5f4de;
}
.card {
  width: 1788px;
  padding: 91px 96px 0;
  min-height: 2200px;
  border-radius: 16px;
  background: linear-gradient(90deg, #4b82ee, #8738e0);
  box-shadow: 0 0 0 1px rgba(200, 205, 225, 0.5), 0 2px 8px rgba(0, 0, 0, 0.2);
}
h1 {
  margin: 0 0 77px;
  text-align: center;
  font-size: 80px;
  line-height: 80px;
  letter-spacing: -2px;
  color: #fff;
}
.field {
  height: 72px;
  padding: 0 24px;
  display: flex;
  align-items: center;
  border: 2px solid #e5e5e5;
  border-radius: 12px;
  background: #fff;
  color: #3e68f2;
}
.select {
  height: 76px;
  margin: 32px 0;
  padding: 0 16px 0 20px;
  display: flex;
  align-items: center;
  border: 2px solid #ccc;
  border-radius: 8px;
  background: #fff;
  font-size: 32px;
  color: #333;
}
.select-value {
  flex: 1;
}
.select-sep {
  width: 2px;
  height: 40px;
  margin-right: 16px;
  background: #ccc;
}
.go {
  display: block;
  width: 100%;
  height: 72px;
  border-radius: 12px;
  background: #fff;
  color: #3e68f2;
  box-shadow: 0 2px 6px rgba(0, 0, 0, 0.2);
}

.map {
  position: relative;
  height: 1000px;
  margin-top: 32px;
  overflow: hidden;
  background: #f7f7f7;
  font-family: Roboto, sans-serif;
}
.canvas {
  display: block;
}
.layer path {
  vector-effect: non-scaling-stroke;
  stroke-linejoin: round;
}
.park path { fill: #ccefd8; }
.water path { fill: #a1d8ec; }
.shop path { fill: #f8eedd; }
.health path { fill: #fbe6e4; }
.air path { fill: #dfe5f5; }
.stream path,
.rail path,
.railtie path,
.minor path,
.major path,
.highcase path,
.highway path,
.freecase path,
.freeway path { fill: none; }
.stream path { stroke: #a1d8ec; stroke-width: 2.5; }
.rail path { stroke: #dddfe3; stroke-width: 2; }
.railtie path { stroke: #dfe1e4; stroke-width: 8; stroke-dasharray: 1.5 20; }
.minor path { stroke: #dae0e7; stroke-width: 3; }
.major path { stroke: #d6dee6; stroke-width: 6; }
.highcase path { stroke: #94a3c8; stroke-width: 6.5; }
.highway path { stroke: #abb8d7; stroke-width: 4.5; }
.freecase path { stroke: #94a3c8; stroke-width: 10.5; }
.freeway path { stroke: #abb8d7; stroke-width: 8.500; }
.runway path { fill: none; stroke: #eceffa; stroke-width: 6; }

.plate {
  fill: #fff;
  stroke: #6d7075;
  stroke-width: 2;
}
.shield text {
  font: 500 20px Roboto, sans-serif;
  letter-spacing: -0.5px;
  text-anchor: middle;
  fill: #55585d;
}
.shield text.light {
  font-size: 18px;
  fill: #fff;
}
.drop {
  fill: #fff;
  filter: drop-shadow(0 2px 2px rgba(0, 0, 0, 0.35));
}
.label {
  font-size: 28px;
  paint-order: stroke;
  stroke: #fff;
  stroke-width: 5px;
  stroke-linejoin: round;
}
.label.area { font-size: 18.500px; font-weight: 500; fill: #3c4047; }
.label.town { font-size: 27px; font-weight: 500; fill: #2d3036; }
.label.city { font-size: 52px; font-weight: 500; fill: #2d3036; }
.label.green { fill: #458c68; }
.label.blue { fill: #3f78e0; }
.label.purple { fill: #7d4fcb; }
.label.slate { fill: #5f7484; }
.label.red { fill: #d5494f; }
.label.pink { fill: #d53fa8; }
.pin {
  fill: #d8503f;
  stroke: #b53a2c;
  stroke-width: 1.5;
}
.google {
  font: 500 38px 'Open Sans', sans-serif;
  paint-order: stroke;
  stroke: #fff;
  stroke-width: 4px;
}
.legal {
  font-size: 20px;
  fill: #000;
}

.map-type {
  position: absolute;
  left: 20px;
  top: 20px;
  height: 80px;
  display: flex;
  border-radius: 4px;
  background: #fff;
  box-shadow: 0 2px 8px rgba(0, 0, 0, 0.25);
}
.map-type button {
  width: 199px;
  padding: 0;
  background: none;
  font: 36px Roboto, sans-serif;
  color: #565656;
}
.map-type .on {
  width: 139px;
  font-weight: 500;
  color: #000;
  box-shadow: 1px 0 3px rgba(0, 0, 0, 0.18);
}
.map-ctl {
  width: 80px;
  height: 80px;
  display: flex;
  align-items: center;
  justify-content: center;
  border-radius: 4px;
  background: #fff;
  box-shadow: 0 2px 8px rgba(0, 0, 0, 0.25);
}
.map-ctl.top {
  position: absolute;
  right: 20px;
  top: 20px;
}
.map-tools {
  position: absolute;
  right: 20px;
  bottom: 48px;
  display: flex;
  flex-direction: column;
  gap: 64px;
}
.zoom {
  height: 162px;
  flex-direction: column;
  justify-content: space-between;
  padding: 22px 0;
}
.rule {
  width: 60px;
  height: 2px;
  background: #e6e6e6;
}

h2 {
  margin: 32px 0 16px;
  font-size: 40px;
  line-height: 56px;
  color: #fff;
}
.results {
  margin: 0;
  padding: 0;
  display: flex;
  flex-direction: column;
  gap: 16px;
  list-style: none;
}
.results li {
  height: 120px;
  padding: 16px;
  border-radius: 8px;
  background: #f3f4f6;
}
.name {
  font-size: 32px;
  font-weight: bold;
  line-height: 48px;
}
.address {
  line-height: 40px;
  color: #4f5866;
}

.scroll {
  flex: 1;
  padding: 6px 4px 0 6px;
  border: solid #e8e8ea;
  border-width: 0 2px;
  background: #fafafa;
}
.scroll span {
  display: block;
  width: 16px;
  height: 934px;
  border-radius: 8px;
  background: #c1c1c1;
}
.chat {
  position: absolute;
  left: 3970px;
  top: 2194px;
  width: 110px;
  height: 110px;
  border-radius: 50%;
  background: #000;
  box-shadow: 0 6px 24px rgba(0, 0, 0, 0.4);
}
</style>
